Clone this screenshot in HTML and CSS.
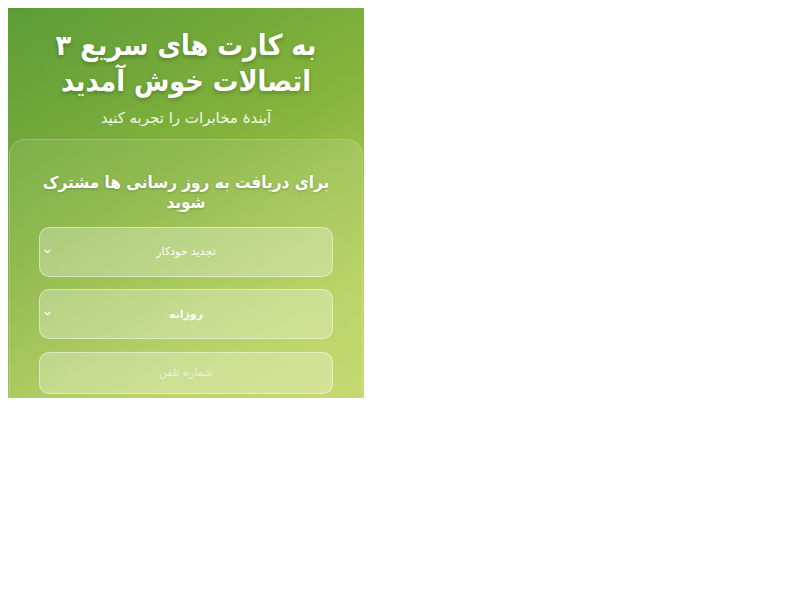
FILE: index.html
```html
<!DOCTYPE html>
<html lang="fa">
<head>
<meta charset="utf-8">
<link rel="stylesheet" href="styles.css">
</head>
<body>
<div class="page" dir="rtl">
  <header class="hero">
    <h1 class="hero-title">به کارت های سریع ۳<br>اتصالات خوش آمدید</h1>
    <p class="hero-sub">آیندهٔ مخابرات را تجربه کنید</p>
  </header>
  <section class="card">
    <h2 class="card-title">برای دریافت به روز رسانی ها مشترک<br>شوید</h2>
    <div class="field select">
      <span class="field-text">تجدید خودکار</span>
      <svg class="chev" viewBox="0 0 8 6" width="7" height="5"><path d="M1 1.5 L4 4.5 L7 1.5" fill="none" stroke="#fff" stroke-width="1.4" stroke-linecap="round" stroke-linejoin="round"/></svg>
    </div>
    <div class="field select">
      <span class="field-text bold">روزانه</span>
      <svg class="chev" viewBox="0 0 8 6" width="7" height="5"><path d="M1 1.5 L4 4.5 L7 1.5" fill="none" stroke="#fff" stroke-width="1.4" stroke-linecap="round" stroke-linejoin="round"/></svg>
    </div>
    <div class="field input">
      <span class="field-text placeholder">شماره تلفن</span>
    </div>
  </section>
</div>
</body>
</html>
```
FILE: styles.css
```css
html, body {
  margin: 0;
  padding: 0;
  background: #fff;
}
body {
  padding: 8px;
  font-family: "DejaVu Sans", "Noto Sans", sans-serif;
}
.page {
  width: 356px;
  height: 390px;
  overflow: hidden;
  background: linear-gradient(150deg, #5c9c38 0%, #86b43c 45%, #b3cf58 80%, #c2d766 100%);
  display: flex;
  flex-direction: column;
}
.hero {
  padding: 20px 10px 0;
  text-align: center;
  color: #fff;
}
.hero-title {
  margin: 0;
  font-family: "DejaVu Sans Condensed", "DejaVu Sans", sans-serif;
  font-size: 28.5px;
  line-height: 36px;
  font-weight: bold;
  text-shadow: 0 2px 4px rgba(0,0,0,0.25);
}
.hero-sub {
  margin: 7px 0 0;
  font-size: 15px;
  line-height: 22px;
  color: rgba(255,255,255,0.92);
}
.card {
  margin-top: 10px;
  margin-left: 1px;
  margin-right: 1px;
  flex: 1;
  border-radius: 16px 16px 0 0;
  background: linear-gradient(135deg, rgba(255,255,255,0.09), rgba(255,255,255,0.13) 60%, rgba(255,255,255,0.07));
  border: 1px solid rgba(255,255,255,0.18);
  border-bottom: none;
  padding: 32px 29px 0;
  display: flex;
  flex-direction: column;
  gap: 12.5px;
}
.card-title {
  margin: 0 0 2px;
  text-align: center;
  color: #fff;
  font-family: "DejaVu Sans Condensed", "DejaVu Sans", sans-serif;
  font-size: 17px;
  line-height: 20px;
  font-weight: bold;
  text-shadow: 0 1px 3px rgba(0,0,0,0.2);
}
.field {
  position: relative;
  box-sizing: border-box;
  height: 50px;
  border-radius: 10px;
  border: 1.5px solid rgba(255,255,255,0.45);
  background: rgba(255,255,255,0.28);
  display: flex;
  align-items: center;
  justify-content: center;
  flex-shrink: 0;
}
.field.input {
  height: 42px;
}
.field-text {
  color: #fff;
  font-size: 11px;
}
.field-text.bold {
  font-weight: bold;
}
.field-text.placeholder {
  color: rgba(255,255,255,0.6);
}
.chev {
  position: absolute;
  left: 4px;
  top: 50%;
  margin-top: -3px;
}
```
